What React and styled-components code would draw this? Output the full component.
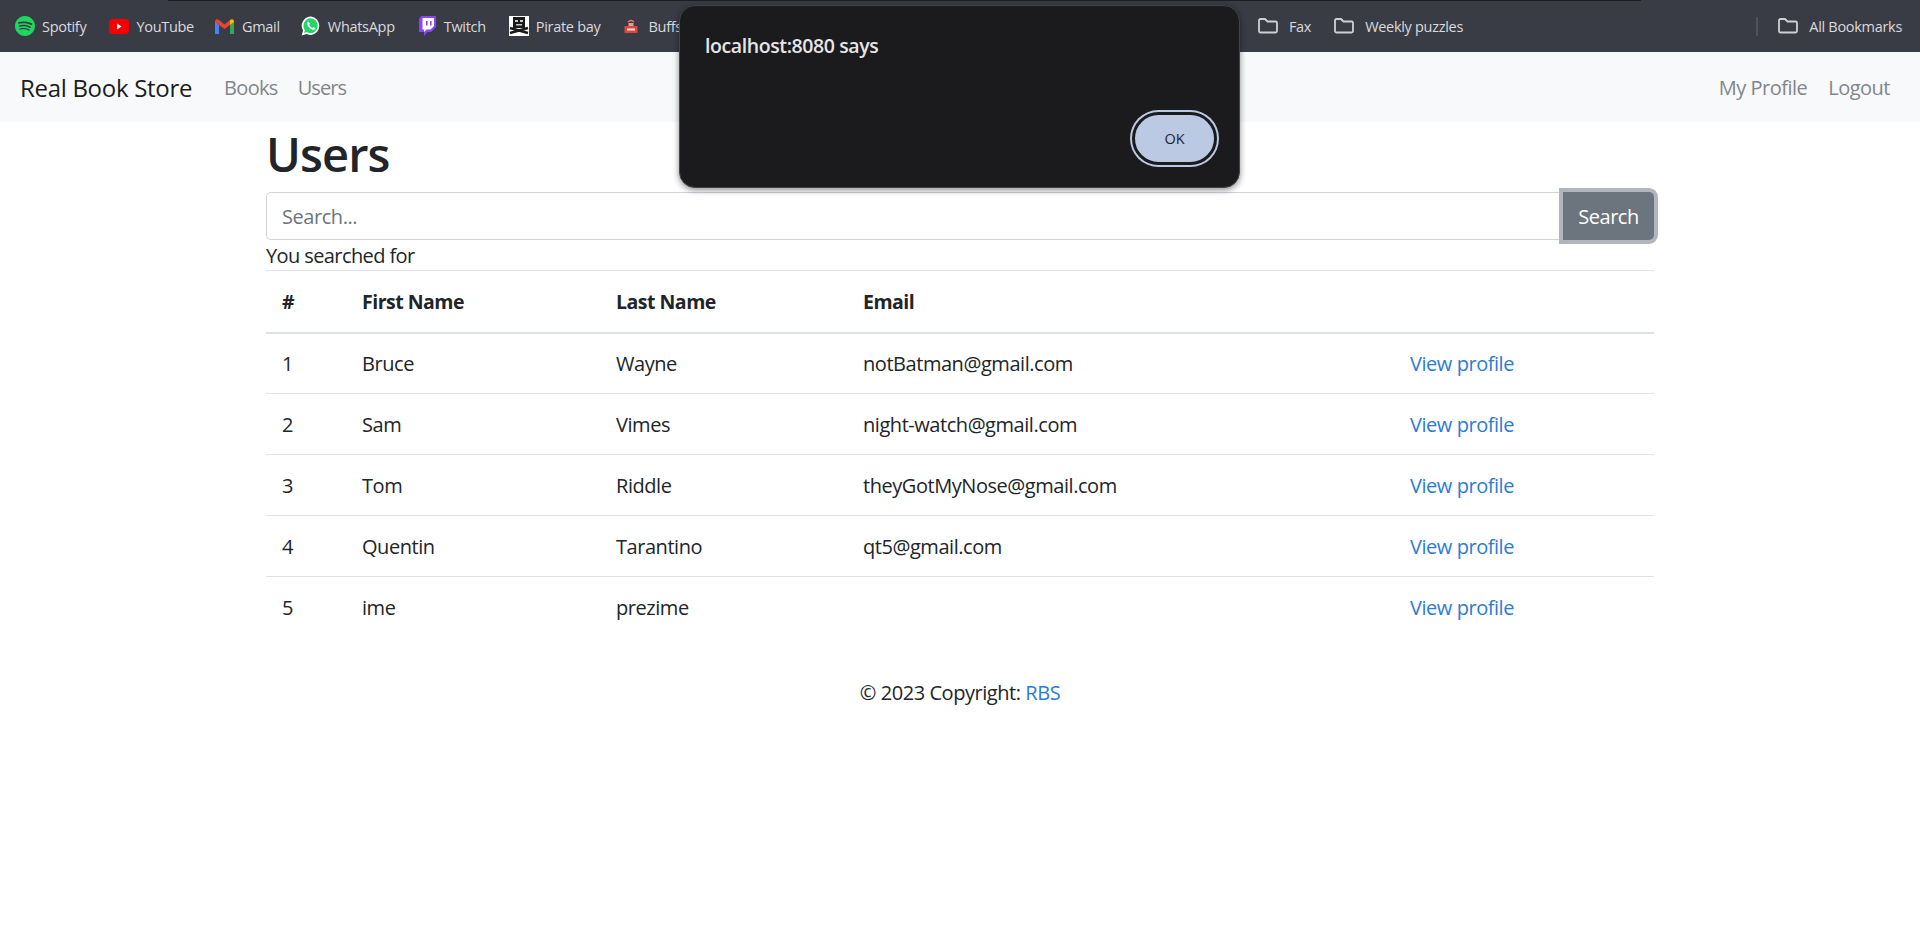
import React from "react";
import styled, { createGlobalStyle } from "styled-components";
import { SiSpotify } from "react-icons/si";

const GlobalStyle = createGlobalStyle`
  body {
    margin: 0;
    background: #fff;
    color: #212529;
    font-family: "Open Sans", "Noto Sans", sans-serif;
    font-size: 20px;
  }
`;

const BookmarksBar = styled.div`
  position: relative;
  height: 52px;
  display: flex;
  align-items: center;
  padding: 0 18px 0 15px;
  background: #3a3c45;
  color: #d9dadd;
  font-size: 14.5px;
  letter-spacing: -0.3px;
`;

const TopEdge = styled.div`
  position: absolute;
  top: 0;
  left: 168px;
  width: 1473px;
  height: 1px;
  background: #1d1e22;
`;

const Bookmark = styled.div`
  display: flex;
  align-items: center;
  gap: ${(props) => props.$gap || 7}px;
  margin-left: ${(props) => props.$left || 0}px;
  white-space: nowrap;
`;

const BookmarkIcon = styled.span`
  width: 20px;
  height: 20px;
  display: flex;
  align-items: center;
  justify-content: center;
  color: ${(props) => props.$color || "#fff"};
  font-size: 20px;
`;

const Spacer = styled.div`
  flex: 1;
`;

const BarDivider = styled.div`
  width: 2px;
  height: 19px;
  background: #50525b;
  margin-right: 20px;
`;

const Navbar = styled.nav`
  height: 70px;
  display: flex;
  align-items: center;
  padding: 0 30px 0 20px;
  background: #f8f9fa;
`;

const Brand = styled.div`
  font-size: 24px;
  letter-spacing: -0.3px;
  color: #1a1d20;
  margin-right: 32px;
`;

const NavLink = styled.a`
  color: #83858a;
  letter-spacing: ${(props) => props.$spacing || -0.5}px;
  margin-right: ${(props) => props.$right || 0}px;
`;

const Main = styled.main`
  width: 1388px;
  margin: 0 auto;
`;

const Title = styled.h1`
  margin: 0 0 10px;
  height: 60px;
  font-size: 47px;
  line-height: 64px;
  font-weight: 600;
  letter-spacing: -0.9px;
`;

const SearchRow = styled.div`
  display: flex;
  height: 48px;
`;

const SearchInput = styled.input`
  flex: 1;
  box-sizing: border-box;
  height: 48px;
  padding: 0 15px;
  border: 1px solid #ced4da;
  border-right: none;
  border-radius: 5px 0 0 5px;
  outline: none;
  font: inherit;
  letter-spacing: -0.45px;

  &::placeholder {
    color: #6c757d;
  }
`;

const SearchButton = styled.button`
  width: 91px;
  height: 48px;
  border: none;
  border-radius: 0 5px 5px 0;
  background: #6c757d;
  color: #fff;
  font: inherit;
  letter-spacing: -0.45px;
  box-shadow: 0 0 0 4px #b2b6bc;
`;

const SearchNote = styled.div`
  height: 30px;
  line-height: 32px;
  letter-spacing: -0.6px;
`;

const Table = styled.table`
  width: 100%;
  border-collapse: collapse;
  table-layout: fixed;
`;

const HeadCell = styled.th`
  box-sizing: border-box;
  height: 62px;
  padding: 0 16px;
  text-align: left;
  font-weight: 700;
  font-size: 19.5px;
  letter-spacing: -0.5px;
  border-top: 1px solid #dee2e6;
  border-bottom: 2px solid #dee2e6;
  width: ${(props) => props.$width}px;
`;

const Row = styled.tr`
  border-bottom: 1px solid ${(props) => (props.$last ? "transparent" : "#dee2e6")};
`;

const Cell = styled.td`
  box-sizing: border-box;
  height: 61px;
  padding: 0 16px;
  letter-spacing: -0.45px;
`;

const ProfileLink = styled.a`
  color: #2b7bd6;
`;

const Footer = styled.footer`
  margin-top: 41px;
  text-align: center;
  letter-spacing: -0.45px;
`;

const FooterLink = styled.a`
  color: #2b7bd6;
`;

const Dialog = styled.div`
  position: absolute;
  top: 5px;
  left: 679px;
  width: 561px;
  height: 183px;
  box-sizing: border-box;
  padding: 26px 24px 0 25px;
  background: #1b1b1d;
  border: 1px solid #44454a;
  border-radius: 16px;
  box-shadow: 0 2px 6px rgba(0, 0, 0, 0.45);
  color: #e6e6e8;
`;

const DialogTitle = styled.div`
  font-size: 19.5px;
  font-weight: 600;
  letter-spacing: -0.4px;
`;

const OkButton = styled.button`
  position: absolute;
  right: 22px;
  bottom: 22px;
  width: 85px;
  height: 53px;
  box-sizing: border-box;
  border: 3px solid #1b1b1d;
  border-radius: 27px;
  background: #bcc9e3;
  box-shadow: 0 0 0 2px #bcc9e3;
  color: #1c2433;
  font-family: inherit;
  font-size: 14.5px;
`;

const FolderIcon = () => (
  <svg width="20" height="16" viewBox="0 0 20 16" fill="none" stroke="#d0d0d4" strokeWidth="1.8">
    <path d="M1 2.5 a1.5 1.5 0 0 1 1.5 -1.5 h4.5 l2.5 2.5 h8 a1.5 1.5 0 0 1 1.5 1.5 v8 a1.5 1.5 0 0 1 -1.5 1.5 h-15 a1.5 1.5 0 0 1 -1.5 -1.5 z" />
  </svg>
);

const YoutubeIcon = () => (
  <svg width="20" height="15" viewBox="0 0 20 15">
    <rect width="20" height="15" rx="4" fill="#f60000" />
    <path d="M8 4.5 L12.5 7.5 L8 10.5 Z" fill="#fff" />
  </svg>
);

const GmailIcon = () => (
  <svg width="19" height="15" viewBox="0 0 19 15">
    <path d="M0 2 L0 15 L4 15 L4 6 Z" fill="#4285f4" />
    <path d="M19 2 L19 15 L15 15 L15 6 Z" fill="#34a853" />
    <path d="M0 2 Q1 -1 4 1 L9.5 5.5 L15 1 L15 6 L9.5 10 L4 6 L0 3 Z" fill="#ea4335" />
    <path d="M15 1 Q18 -1 19 2 L19 3 L15 6 Z" fill="#fbbc04" />
  </svg>
);

const WhatsappIcon = () => (
  <svg width="20" height="20" viewBox="0 0 20 20">
    <path d="M10 0.5 A9.3 9.3 0 0 1 10 19 A9.3 9.3 0 0 1 5.6 17.9 L0.6 19.4 L2.1 14.6 A9.3 9.3 0 0 1 10 0.5 Z" fill="#fff" />
    <path d="M10 2.2 A7.6 7.6 0 0 1 10 17.3 A7.6 7.6 0 0 1 5.9 16.1 L3 17 L3.9 14.2 A7.6 7.6 0 0 1 10 2.2 Z" fill="#25d366" />
    <path d="M7.3 5.6 C6.5 5.8 6 6.8 6.2 7.9 C6.6 10.2 9.4 13.3 12.2 13.8 C13.3 14 14.3 13.3 14.4 12.3 L12.4 11 L11.4 12 C10.2 11.6 8.7 10 8.2 8.7 L9.1 7.7 Z" fill="#fff" />
  </svg>
);

const TwitchIcon = () => (
  <svg width="18" height="20" viewBox="0 0 18 20">
    <path d="M3 0 H18 V11 L13 16 H9.5 L6 20 V16 H1 V3 Z" fill="#8b44f7" />
    <path d="M4.5 2 H16 V10 L12.5 13.5 H8.5 L6 16 V13.5 H4.5 Z" fill="#fff" />
    <path d="M8 5 H9.6 V9.5 H8 Z M12 5 H13.6 V9.5 H12 Z" fill="#8b44f7" />
  </svg>
);

const PirateIcon = () => (
  <svg width="20" height="20" viewBox="0 0 20 20">
    <rect width="20" height="20" fill="#fff" />
    <path d="M4 1 h12 v11 h-12 z" fill="#1a1a1a" />
    <path d="M6 4 h3 v2 h-3 z M11 4 h3 v2 h-3 z M7 8 h6 v1.5 h-6 z" fill="#c9c9c9" />
    <path d="M1 12 L19 17 M19 12 L1 17" stroke="#1a1a1a" strokeWidth="2.4" />
  </svg>
);

const BuffsIcon = () => (
  <svg width="14" height="14" viewBox="0 0 14 14">
    <path d="M4 3 Q7 0 10 3" fill="none" stroke="#ef7d6e" strokeWidth="1.2" />
    <path d="M4.5 4 h5 v3 h-5 z" fill="#f19a8c" />
    <path d="M0.5 7 h13 v7 h-13 z" fill="#d9483f" />
    <path d="M3 9.5 h8 v2 h-8 z" fill="#fbe3df" />
  </svg>
);

const leftBookmarks = [
  { label: "Spotify", icon: <SiSpotify />, color: "#1ed760", left: 0 },
  { label: "YouTube", icon: <YoutubeIcon />, left: 23 },
  { label: "Gmail", icon: <GmailIcon />, left: 21 },
  { label: "WhatsApp", icon: <WhatsappIcon />, left: 21 },
  { label: "Twitch", icon: <TwitchIcon />, left: 22 },
  { label: "Pirate bay", icon: <PirateIcon />, left: 23 },
  { label: "Buffs", icon: <BuffsIcon />, left: 21 },
];

const folders = [
  { label: "Fax", left: 576 },
  { label: "Weekly puzzles", left: 23 },
];

const users = [
  { id: 1, first: "Bruce", last: "Wayne", email: "notBatman@gmail.com" },
  { id: 2, first: "Sam", last: "Vimes", email: "night-watch@gmail.com" },
  { id: 3, first: "Tom", last: "Riddle", email: "theyGotMyNose@gmail.com" },
  { id: 4, first: "Quentin", last: "Tarantino", email: "qt5@gmail.com" },
  { id: 5, first: "ime", last: "prezime", email: "" },
];

const App = () => {
  return (
    <>
      <GlobalStyle />
      <BookmarksBar>
        <TopEdge />
        {leftBookmarks.map((b) => (
          <Bookmark key={b.label} $left={b.left}>
            <BookmarkIcon $color={b.color}>{b.icon}</BookmarkIcon>
            {b.label}
          </Bookmark>
        ))}
        {folders.map((f) => (
          <Bookmark key={f.label} $left={f.left} $gap={11}>
            <BookmarkIcon><FolderIcon /></BookmarkIcon>
            {f.label}
          </Bookmark>
        ))}
        <Spacer />
        <BarDivider />
        <Bookmark $gap={11}>
          <BookmarkIcon><FolderIcon /></BookmarkIcon>
          All Bookmarks
        </Bookmark>
      </BookmarksBar>
      <Navbar>
        <Brand>Real Book Store</Brand>
        <NavLink $right={20} $spacing={-0.7}>Books</NavLink>
        <NavLink $spacing={-0.9}>Users</NavLink>
        <Spacer />
        <NavLink $right={21}>My Profile</NavLink>
        <NavLink>Logout</NavLink>
      </Navbar>
      <Main>
        <Title>Users</Title>
        <SearchRow>
          <SearchInput placeholder="Search..." />
          <SearchButton>Search</SearchButton>
        </SearchRow>
        <SearchNote>You searched for</SearchNote>
        <Table>
          <thead>
            <tr>
              <HeadCell $width={80}>#</HeadCell>
              <HeadCell $width={254}>First Name</HeadCell>
              <HeadCell $width={247}>Last Name</HeadCell>
              <HeadCell $width={547}>Email</HeadCell>
              <HeadCell />
            </tr>
          </thead>
          <tbody>
            {users.map((u, i) => (
              <Row key={u.id} $last={i === users.length - 1}>
                <Cell>{u.id}</Cell>
                <Cell>{u.first}</Cell>
                <Cell>{u.last}</Cell>
                <Cell>{u.email}</Cell>
                <Cell><ProfileLink>View profile</ProfileLink></Cell>
              </Row>
            ))}
          </tbody>
        </Table>
        <Footer>© 2023 Copyright: <FooterLink>RBS</FooterLink></Footer>
      </Main>
      <Dialog>
        <DialogTitle>localhost:8080 says</DialogTitle>
        <OkButton>OK</OkButton>
      </Dialog>
    </>
  );
};

export default App;
